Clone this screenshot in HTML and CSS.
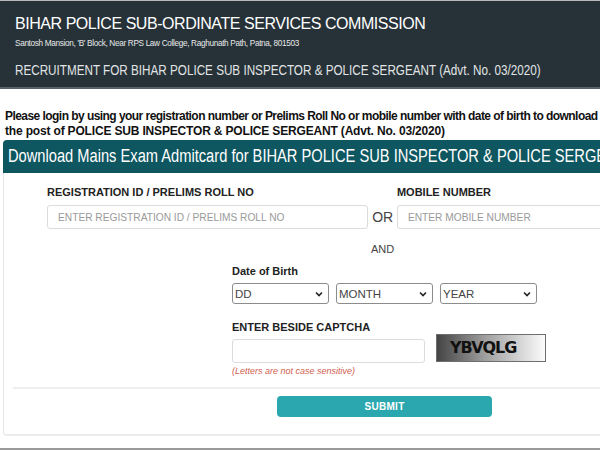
FILE: index.html
```html
<!DOCTYPE html>
<html>
<head>
<meta charset="utf-8">
<link rel="stylesheet" href="styles.css">
</head>
<body>
<div class="page">
  <header class="site-header">
    <h1 class="site-title">BIHAR POLICE SUB-ORDINATE SERVICES COMMISSION</h1>
    <div class="site-address"><span class="squeeze">Santosh Mansion, 'B' Block, Near RPS Law College, Raghunath Path, Patna, 801503</span></div>
    <div class="site-sub"><span class="squeeze">RECRUITMENT FOR BIHAR POLICE SUB INSPECTOR &amp; POLICE SERGEANT (Advt. No. 03/2020)</span></div>
  </header>

  <p class="intro"><span class="intro-first">Please login by using your registration number or Prelims Roll No or mobile number with date of birth to download Mains Exam Admit Card for</span><br>the post of POLICE SUB INSPECTOR &amp; POLICE SERGEANT (Advt. No. 03/2020)</p>

  <section class="card">
    <div class="card-head"><span class="squeeze">Download Mains Exam Admitcard for BIHAR POLICE SUB INSPECTOR &amp; POLICE SERGEANT (Advt. No. 03/2020)</span></div>
    <div class="card-body">
      <div class="id-row">
        <div class="field field-reg">
          <label class="lbl">REGISTRATION ID / PRELIMS ROLL NO</label>
          <input class="inp" type="text" placeholder="ENTER REGISTRATION ID / PRELIMS ROLL NO">
        </div>
        <div class="or">OR</div>
        <div class="field field-mob">
          <label class="lbl">MOBILE NUMBER</label>
          <input class="inp" type="text" placeholder="ENTER MOBILE NUMBER">
        </div>
      </div>
      <div class="and">AND</div>

      <div class="sub-block">
        <label class="lbl">Date of Birth</label>
        <div class="dob-row">
          <div class="sel">
            <select><option>DD</option></select>
            <svg class="chev" width="8" height="6" viewBox="0 0 8 6"><path d="M1 1.5 L4 4.5 L7 1.5" fill="none" stroke="#222" stroke-width="1.6"/></svg>
          </div>
          <div class="sel">
            <select><option>MONTH</option></select>
            <svg class="chev" width="8" height="6" viewBox="0 0 8 6"><path d="M1 1.5 L4 4.5 L7 1.5" fill="none" stroke="#222" stroke-width="1.6"/></svg>
          </div>
          <div class="sel">
            <select><option>YEAR</option></select>
            <svg class="chev" width="8" height="6" viewBox="0 0 8 6"><path d="M1 1.5 L4 4.5 L7 1.5" fill="none" stroke="#222" stroke-width="1.6"/></svg>
          </div>
        </div>

        <label class="lbl lbl-cap">ENTER BESIDE CAPTCHA</label>
        <div class="cap-row">
          <input class="inp inp-cap" type="text">
          <div class="captcha">YBVQLG</div>
        </div>
        <div class="note">(Letters are not case sensitive)</div>
      </div>

      <div class="sep"></div>
      <div class="btn-row">
        <button class="btn">SUBMIT</button>
      </div>
    </div>
  </section>
</div>
</body>
</html>
```

FILE: styles.css
```css
html, body {
  margin: 0;
  padding: 0;
  width: 600px;
  height: 450px;
  overflow: hidden;
  background: #fff;
}
.page {
  width: 600px;
  height: 450px;
  overflow: hidden;
  font-family: "Liberation Sans", Arial, sans-serif;
  border-top: 1px solid #b5b8ba;
  border-bottom: 2px solid #9a9a9a;
  box-sizing: border-box;
}
.squeeze {
  display: inline-block;
  transform-origin: left center;
  white-space: nowrap;
}
.site-header {
  background: #263238;
  height: 88px;
  box-sizing: border-box;
  padding: 13px 15px 0;
  border-bottom: 2px solid #56636a;
  white-space: nowrap;
}
.site-title {
  margin: 0;
  font-size: 16px;
  font-weight: normal;
  line-height: 19px;
  color: #fff;
  letter-spacing: -0.45px;
}
.site-address {
  margin-top: 5px;
  font-size: 9px;
  line-height: 11px;
  color: #e8e8e8;
  letter-spacing: -0.35px;
}
.site-address .squeeze { transform: scaleX(0.91); }
.site-sub {
  margin-top: 13px;
  font-size: 14px;
  line-height: 16px;
  color: #e2e4e5;
}
.site-sub .squeeze { transform: scaleX(0.835); }
.intro {
  margin: 0;
  padding: 20px 0 0 5px;
  font-size: 12px;
  line-height: 15px;
  font-weight: bold;
  color: #111;
  letter-spacing: -0.17px;
  white-space: nowrap;
}
.intro-first { letter-spacing: -0.55px; }
.card {
  margin: 1px 0 0 3px;
  width: 620px;
}
.card-head {
  background: #0e5660;
  color: #fff;
  font-size: 18px;
  line-height: 33px;
  height: 33px;
  padding-left: 5px;
  border-radius: 4px 0 0 0;
  white-space: nowrap;
  overflow: hidden;
}
.card-head .squeeze { transform: scaleX(0.815); }
.card-body {
  border-left: 1px solid #e6e6e6;
  border-bottom: 2px solid #ececec;
  border-radius: 0 0 0 4px;
  padding: 12px 0 0 43px;
  height: 263px;
  box-sizing: border-box;
}
.id-row {
  display: flex;
  align-items: flex-end;
}
.field {
  display: flex;
  flex-direction: column;
}
.field-reg { width: 327px; }
.field-mob { width: 230px; }
.lbl {
  display: block;
  font-size: 11px;
  font-weight: bold;
  color: #222;
  line-height: 14px;
  height: 14px;
}
.field .lbl { margin-bottom: 6px; }
.inp {
  box-sizing: border-box;
  height: 24px;
  border: 1px solid #dcdcdc;
  border-radius: 3px;
  padding: 0 0 0 10px;
  font-family: "Liberation Sans", Arial, sans-serif;
  font-size: 10.2px;
  outline: none;
  background: #fff;
}
.inp::placeholder { color: #9a9a9a; }
.or {
  width: 29px;
  text-align: center;
  font-size: 14px;
  color: #444;
  line-height: 24px;
  height: 24px;
}
.and {
  margin: 10px 0 0 324px;
  font-size: 11px;
  color: #444;
  line-height: 20px;
}
.sub-block {
  margin: 5px 0 0 185px;
}
.dob-row {
  display: flex;
  gap: 7px;
  margin-top: 5px;
}
.sel {
  position: relative;
  width: 97px;
  height: 21px;
}
.sel select {
  appearance: none;
  -webkit-appearance: none;
  width: 100%;
  height: 100%;
  box-sizing: border-box;
  border: 1px solid #8c8c8c;
  border-radius: 3px;
  background: #fff;
  font-family: "Liberation Sans", Arial, sans-serif;
  font-size: 11.5px;
  color: #444;
  padding: 0 0 0 2px;
}
.sel .chev {
  position: absolute;
  right: 6px;
  top: 8px;
}
.lbl-cap { margin-top: 16px; }
.cap-row {
  display: flex;
  align-items: flex-start;
}
.inp-cap {
  width: 193px;
  margin-top: 5px;
}
.captcha {
  margin-left: 11px;
  width: 110px;
  height: 28px;
  box-sizing: border-box;
  border: 1px solid #6e6e6e;
  background: linear-gradient(to right, #444, #a0a0a0 45%, #fbfbfb);
  font-family: "DejaVu Sans", sans-serif;
  font-weight: bold;
  font-size: 16px;
  letter-spacing: -1px;
  line-height: 26px;
  padding-left: 13px;
  color: #111;
}
.note {
  margin-top: 2px;
  font-size: 9px;
  font-style: italic;
  color: #d0604f;
  line-height: 12px;
}
.sep {
  margin: 10px 0 0 -34px;
  height: 2px;
  background: #efefef;
}
.btn-row {
  padding: 7px 0 0 230px;
}
.btn {
  width: 215px;
  height: 21px;
  border: none;
  border-radius: 4px;
  background: #2ba7af;
  color: #fff;
  font-family: "Liberation Sans", Arial, sans-serif;
  font-weight: bold;
  font-size: 10px;
  letter-spacing: 0.3px;
  padding: 0;
}
```
